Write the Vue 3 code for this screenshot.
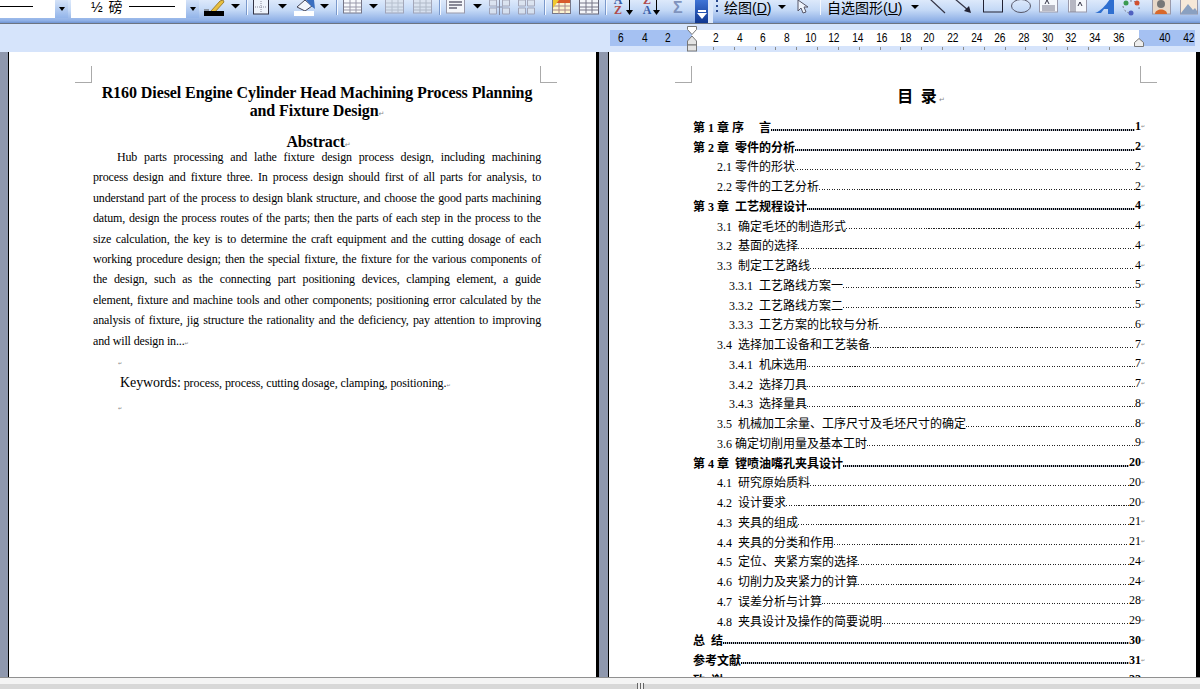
<template>
  <div class="app">
    <div class="toolbar">
      <div class="combo c1"><span class="sample s1"></span><span class="combo-btn"><i></i></span></div>
      <div class="combo c2"><span class="weight">½ 磅</span><span class="sample s2"></span><span class="combo-btn"><i></i></span></div>
      <!-- border colour pen -->
      <svg width="29" height="23"><path d="M12 11 L21 1 L24 0 L25 2 L15 13 Z" fill="#e8c040" stroke="#a08030"/><path d="M5 10h5" stroke="#555"/><rect x="5" y="11" width="20" height="5" fill="#000"/></svg>
      <svg width="15" height="23"><path d="M3 4h9l-4.500 4.500z"/></svg>
      <svg width="7" height="23"><path d="M4.500 0v15" stroke="#f4f8ff"/><path d="M3.500 0v15" stroke="#7a99cc"/></svg>
      <!-- outside border -->
      <svg width="25" height="23"><rect x="3.500" y="-3" width="15" height="17" fill="#eef3fb" stroke="#334"/><path d="M11 1v12M5 7h12" stroke="#889" stroke-dasharray="1 1"/></svg>
      <svg width="16" height="23"><path d="M3 4h9l-4.500 4.500z"/></svg>
      <!-- fill bucket -->
      <svg width="26" height="23"><path d="M6 7 L14 0 L21 6 L14 11 Z" fill="#f3f6fb" stroke="#445"/><path d="M15 0 L23 0 L24 9 L20 6 Z" fill="#3b6fc0"/><rect x="3" y="11" width="20" height="5" fill="#fff"/></svg>
      <svg width="16" height="23"><path d="M3 4h9l-4.500 4.500z"/></svg>
      <svg width="7" height="23"><path d="M4.500 0v15" stroke="#f4f8ff"/><path d="M3.500 0v15" stroke="#7a99cc"/></svg>
      <!-- insert table -->
      <svg width="25" height="23"><rect x="3.500" y="-2" width="18" height="15" fill="#f8fafd" stroke="#778"/><path d="M4 3h17M4 7h17M4 10h17M10 0v13M16 0v13" stroke="#99a"/></svg>
      <svg width="17" height="23"><path d="M4 4h9l-4.500 4.500z"/></svg>
      <svg width="28" height="23" class="off"><rect x="3.500" y="-2" width="18" height="15" fill="#dde4ee" stroke="#99a"/><path d="M4 3h17M4 7h17M4 10h17M10 0v13M16 0v13" stroke="#b0b8c4"/></svg>
      <svg width="26" height="23" class="off"><rect x="3.500" y="-2" width="18" height="15" fill="#dde4ee" stroke="#99a"/><path d="M4 3h17M4 7h17M4 10h17M10 0v13M16 0v13" stroke="#a8b0bc"/></svg>
      <svg width="7" height="23"><path d="M4.500 0v15" stroke="#f4f8ff"/><path d="M3.500 0v15" stroke="#7a99cc"/></svg>
      <!-- align -->
      <svg width="27" height="23"><rect x="3.500" y="-2" width="18" height="15" fill="#f4f6fa" stroke="#99a"/><path d="M6 2h13M6 5h13M6 8h8" stroke="#667" stroke-width="1.500"/></svg>
      <svg width="16" height="23"><path d="M3 4h9l-4.500 4.500z"/></svg>
      <svg width="30" height="23" class="off"><path d="M3.500 0h7v6h-7zM3.500 8h7v6h-7zM16.500 0h7v6h-7zM16.500 8h7v6h-7z" fill="#dde4ee" stroke="#99a"/><path d="M13.500 0v15M10 7h7" stroke="#778"/></svg>
      <svg width="25" height="23" class="off"><path d="M2.500 0h7v6h-7zM2.500 8h7v6h-7zM11.500 0h7v6h-7zM11.500 8h7v6h-7z" fill="#dde4ee" stroke="#99a"/></svg>
      <svg width="7" height="23"><path d="M4.500 0v15" stroke="#f4f8ff"/><path d="M3.500 0v15" stroke="#7a99cc"/></svg>
      <!-- table autoformat -->
      <svg width="27" height="23"><rect x="4.500" y="0.500" width="18" height="13" fill="#fbf3d0" stroke="#778"/><path d="M5 0h17v3H5z" fill="#d85a2a"/><path d="M5 6h17M5 10h17M11 3v11M17 3v11" stroke="#a88"/><path d="M5 0l6 0-6 8z" fill="#f0c830"/></svg>
      <svg width="27" height="23"><rect x="4.500" y="-1" width="19" height="15" fill="#f4f6fa" stroke="#667"/><path d="M5 3h18M5 7h18M5 10h18M11 0v13M17 0v13" stroke="#778"/></svg>
      <svg width="7" height="23"><path d="M4.500 0v15" stroke="#f4f8ff"/><path d="M3.500 0v15" stroke="#7a99cc"/></svg>
      <!-- sort and sum -->
      <div class="sort s-a"><span class="l-blue">A</span><span class="l-red">Z</span></div>
      <svg width="10" height="23"><path d="M4.500 0v12" stroke="#000"/><path d="M1 10h7l-3.500 5z"/></svg>
      <div class="sort s-z"><span class="l-red">Z</span><span class="l-blue">A</span></div>
      <svg width="10" height="23"><path d="M4.500 0v12" stroke="#000"/><path d="M1 10h7l-3.500 5z"/></svg>
      <span class="sigma">Σ</span>
      <div class="overflow"><i class="o-bar"></i><i class="o-tri"></i></div>
      <div class="gap-tab"></div>
      <div class="toolbar2">
        <span class="grip"></span>
        <span class="menu m1">绘图(<u>D</u>)</span>
        <svg width="22" height="23"><path d="M3 5h8l-4 4z"/></svg>
        <!-- cursor -->
        <svg width="23" height="23"><path d="M1 0 L1 11 L4 8 L6 13 L9 12 L7 7 L11 7 Z" fill="#eef3fb" stroke="#556"/></svg>
        <svg width="7" height="23"><path d="M0.500 0v15" stroke="#f4f8ff"/></svg>
        <span class="menu m2">自选图形(<u>U</u>)</span>
        <svg width="18" height="23"><path d="M0 5h8l-4 4z"/></svg>
        <svg width="26" height="23"><path d="M1 -1 L16 13" stroke="#334" stroke-width="1.200"/></svg>
        <svg width="28" height="23"><path d="M0 -1 L13 10" stroke="#334" stroke-width="1.200"/><path d="M9 11 L16 13 L14 6 Z" fill="#223"/></svg>
        <svg width="28" height="23"><rect x="0.500" y="-3" width="19" height="15" fill="none" stroke="#223"/></svg>
        <svg width="28" height="23"><ellipse cx="10" cy="6" rx="9.500" ry="6.500" fill="none" stroke="#556"/></svg>
        <svg width="28" height="23"><rect x="0.500" y="-2" width="18" height="14" fill="#f6f8fc" stroke="#99a"/><path d="M3 6h13M3 8h13M3 10h13" stroke="#778"/><path d="M6 4 l2-4 2 4" fill="none" stroke="#334"/></svg>
        <svg width="27" height="23"><rect x="1.500" y="-2" width="18" height="14" fill="#f6f8fc" stroke="#99a"/><path d="M4 0v12M6 0v12M8 0v12" stroke="#778"/><path d="M11 6 l2-4 2 4" fill="none" stroke="#334"/></svg>
        <svg width="28" height="23"><path d="M1 13 C7 11 12 5 16 -1 L20 -1 L20 14 L14 14 L14 9 L10 9 L7 13 Z" fill="#2f6fd0"/></svg>
        <svg width="30" height="23"><path d="M8 1 A8 7 0 0 1 17 9" fill="none" stroke="#778" stroke-dasharray="2 2"/><circle cx="15" cy="3" r="2.500" fill="#d05030"/><circle cx="4" cy="3" r="2.500" fill="#3a9a50"/><circle cx="9" cy="13" r="2.500" fill="#5060c0"/><path d="M1 6 A8 8 0 0 0 7 13" fill="none" stroke="#778" stroke-dasharray="2 2"/></svg>
        <svg width="28" height="23"><rect x="0.500" y="-2" width="18" height="16" fill="#e8d8c8" stroke="#99a"/><circle cx="9" cy="4" r="4" fill="#777"/><path d="M3 14 C3 8 15 8 15 14Z" fill="#d8682a"/></svg>
        <svg width="20" height="23"><rect x="0.500" y="-2" width="17" height="16" fill="#f6e8d8" stroke="#99a"/><path d="M1 13 L8 4 L13 10 L15 8 L17 11 V14 H1Z" fill="#8aa0c0"/></svg>
      </div>
    </div>

    <div class="ruler">
      <div class="scale">
        <div class="margin-l"><span v-for="n in leftNums" :key="n" class="num">{{ n }}</span></div>
        <div class="inner"><span v-for="n in innerNums" :key="n" class="num">{{ n }}</span></div>
        <div class="margin-r"><span class="num">40</span><span class="num">42</span></div>
      </div>
      <div class="ticks"></div>
      <svg class="hourglass" width="11" height="26" viewBox="0 0 11 26"><path d="M0.500 0.500h9v3l-4.500 5-4.500-5z" fill="#fff" stroke="#777"/><path d="M5 10l4.500 5v4h-9v-4z" fill="#e4e4e4" stroke="#777"/><rect x="0.500" y="19" width="9" height="6" fill="#e4e4e4" stroke="#777"/></svg>
      <svg class="indent-r" width="10" height="9" viewBox="0 0 10 9"><path d="M5 0.500l4.500 4v4h-9v-4z" fill="#eee" stroke="#777"/></svg>
    </div>

    <div class="work">
      <div class="gutter first"></div>
      <div class="page left">
        <div class="crops"><span class="crop tl"></span><span class="crop tr"></span></div>
        <h1 class="en-title">R160 Diesel Engine Cylinder Head Machining Process Planning and Fixture Design<span class="mark">↵</span></h1>
        <h2 class="abs-title">Abstract<span class="mark">↵</span></h2>
        <div class="abs-body">
          <div v-for="(line, i) in abstractLines" :key="i" class="abs-line" :class="{ first: i === 0 }">{{ line }}</div>
          <div class="abs-line last">and will design in...<span class="mark small">↵</span></div>
        </div>
        <div class="stub"><span class="mark small">↵</span></div>
        <div class="keywords"><span class="kw">Keywords:</span> process, process, cutting dosage, clamping, positioning.<span class="mark small">↵</span></div>
        <div class="stub s2"><span class="mark small">↵</span></div>
      </div>
      <div class="gutter mid"></div>
      <div class="page right">
        <div class="crops"><span class="crop tl"></span><span class="crop tr"></span></div>
        <div class="toc-title">目 录<span class="mark">↵</span></div>
        <div class="toc">
          <div v-for="(row, i) in toc" :key="i" class="row" :class="'lv' + row.lv">
            <span class="label">{{ row.t }}</span>
            <span class="leader"></span>
            <span class="pg">{{ row.p }}</span>
            <span class="mark tiny">↵</span>
          </div>
        </div>
      </div>
      <div class="gutter end"></div>
    </div>

    <div class="status">
      <span class="split"></span>
    </div>
  </div>
</template>

<script setup>
const leftNums = [6, 4, 2]
const innerNums = [2, 4, 6, 8, 10, 12, 14, 16, 18, 20, 22, 24, 26, 28, 30, 32, 34, 36]

const abstractLines = [
  'Hub parts processing and lathe fixture design process design, including machining',
  'process design and fixture three. In process design should first of all parts for analysis, to',
  'understand part of the process to design blank structure, and choose the good parts machining',
  'datum, design the process routes of the parts; then the parts of each step in the process to the',
  'size calculation, the key is to determine the craft equipment and the cutting dosage of each',
  'working procedure design; then the special fixture, the fixture for the various components of',
  'the design, such as the connecting part positioning devices, clamping element, a guide',
  'element, fixture and machine tools and other components; positioning error calculated by the',
  'analysis of fixture, jig structure the rationality and the deficiency, pay attention to improving'
]

const toc = [
  { lv: 1, t: '第 1 章 序\u00a0\u00a0\u00a0\u00a0 言', p: 1 },
  { lv: 1, t: '第 2 章  零件的分析', p: 2 },
  { lv: 2, t: '2.1 零件的形状', p: 2 },
  { lv: 2, t: '2.2 零件的工艺分析', p: 2 },
  { lv: 1, t: '第 3 章  工艺规程设计', p: 4 },
  { lv: 2, t: '3.1  确定毛坯的制造形式', p: 4 },
  { lv: 2, t: '3.2  基面的选择', p: 4 },
  { lv: 2, t: '3.3  制定工艺路线', p: 4 },
  { lv: 3, t: '3.3.1  工艺路线方案一', p: 5 },
  { lv: 3, t: '3.3.2  工艺路线方案二', p: 5 },
  { lv: 3, t: '3.3.3  工艺方案的比较与分析', p: 6 },
  { lv: 2, t: '3.4  选择加工设备和工艺装备', p: 7 },
  { lv: 3, t: '3.4.1  机床选用', p: 7 },
  { lv: 3, t: '3.4.2  选择刀具', p: 7 },
  { lv: 3, t: '3.4.3  选择量具', p: 8 },
  { lv: 2, t: '3.5  机械加工余量、工序尺寸及毛坯尺寸的确定', p: 8 },
  { lv: 2, t: '3.6 确定切削用量及基本工时', p: 9 },
  { lv: 1, t: '第 4 章  镗喷油嘴孔夹具设计', p: 20 },
  { lv: 2, t: '4.1  研究原始质料', p: 20 },
  { lv: 2, t: '4.2  设计要求', p: 20 },
  { lv: 2, t: '4.3  夹具的组成', p: 21 },
  { lv: 2, t: '4.4  夹具的分类和作用', p: 21 },
  { lv: 2, t: '4.5  定位、夹紧方案的选择', p: 24 },
  { lv: 2, t: '4.6  切削力及夹紧力的计算', p: 24 },
  { lv: 2, t: '4.7  误差分析与计算', p: 28 },
  { lv: 2, t: '4.8  夹具设计及操作的简要说明', p: 29 },
  { lv: 1, t: '总  结', p: 30 },
  { lv: 1, t: '参考文献', p: 31 },
  { lv: 1, t: '致  谢', p: 32 }
]
</script>

<style>
html, body {
  margin: 0;
  background: #fff;
}
</style>

<style scoped>
.app {
  width: 1200px;
  height: 689px;
  display: flex;
  flex-direction: column;
  overflow: hidden;
  font-family: "Liberation Serif", "Noto Sans CJK SC", serif;
  color: #000;
}

/* toolbar */
.toolbar {
  height: 23px;
  flex: none;
  display: flex;
  background: linear-gradient(#dde9fb, #c3d8f6 45%, #8fb0e6 90%, #6f93d2);
  border-bottom: 1px solid #6d7480;
  box-sizing: content-box;
  overflow: hidden;
}
.toolbar svg {
  flex: none;
  display: block;
}
.off {
  opacity: 0.8;
}
.combo {
  height: 18px;
  background: #fff;
  display: flex;
  align-items: flex-start;
  flex: none;
  box-sizing: border-box;
}
.c1 {
  width: 68px;
}
.c2 {
  width: 128px;
  margin-left: 3px;
  padding-left: 20px;
}
.combo-btn {
  width: 13px;
  height: 18px;
  margin-left: auto;
  background: linear-gradient(#d5e3f8, #93b5ea);
  display: flex;
  align-items: center;
  justify-content: center;
}
.combo-btn i {
  border-left: 3.500px solid transparent;
  border-right: 3.500px solid transparent;
  border-top: 4px solid #000;
}
.sample {
  display: block;
  height: 1px;
  background: #000;
  margin-top: 6px;
}
.s1 {
  width: 33px;
}
.s2 {
  width: 46px;
  margin-left: 6px;
}
.weight {
  font-family: "Liberation Sans", "Noto Sans CJK SC", sans-serif;
  font-size: 14px;
  line-height: 15px;
  white-space: nowrap;
  word-spacing: 2px;
}
.sort {
  width: 10px;
  flex: none;
  display: flex;
  flex-direction: column;
  font-weight: bold;
  font-size: 12px;
  line-height: 10px;
  align-items: center;
  margin-top: -5px;
}
.s-a {
  margin-left: 4px;
  margin-right: 2px;
}
.s-z {
  margin-left: 7px;
  margin-right: 0;
}
.l-blue {
  color: #3a5ea8;
}
.l-red {
  color: #b04a4a;
}
.sigma {
  flex: none;
  width: 22px;
  padding-left: 11px;
  color: #7f93bd;
  font: bold 16px/15px "Liberation Sans", sans-serif;
}
.overflow {
  width: 13px;
  height: 23px;
  flex: none;
  background: linear-gradient(#3f74d6, #0f3690);
  position: relative;
}
.o-bar {
  position: absolute;
  left: 3px;
  top: 10px;
  width: 8px;
  height: 2px;
  background: #fff;
}
.o-tri {
  position: absolute;
  left: 2px;
  top: 13px;
  width: 0;
  height: 0;
  border-left: 5px solid transparent;
  border-right: 5px solid transparent;
  border-top: 6px solid #fff;
}
.gap-tab {
  width: 5px;
  flex: none;
  background: #dce8fa;
}
.toolbar2 {
  flex: none;
  display: flex;
  width: 487px;
  padding-left: 3px;
  box-sizing: border-box;
}
.grip {
  width: 2px;
  height: 15px;
  margin-right: 6px;
  flex: none;
  background: repeating-linear-gradient(#2a4a90 0 2px, transparent 2px 5px);
}
.menu {
  flex: none;
  font: 14px/17px "Liberation Sans", "Noto Sans CJK SC", sans-serif;
  white-space: nowrap;
}
.m1 {
  width: 51px;
}
.m2 {
  width: 84px;
}

/* ruler */
.ruler {
  height: 28px;
  flex: none;
  background: #d6e4fb;
  padding: 6px 0 0 610px;
  box-sizing: border-box;
  position: relative;
}
.scale {
  display: flex;
  height: 16px;
  font: 12px/16px "Liberation Sans", sans-serif;
}
.num {
  width: 23.700px;
  text-align: center;
  flex: none;
  transform: scaleX(0.85);
}
.margin-l {
  width: 82px;
  background: #a5c1f2;
  display: flex;
  justify-content: flex-end;
  padding-right: 12px;
  box-sizing: border-box;
}
.inner {
  width: 447px;
  background: #fff;
  display: flex;
  padding-left: 12px;
  box-sizing: border-box;
}
.margin-r {
  width: 56px;
  background: #a5c1f2;
  display: flex;
  padding-left: 14px;
  box-sizing: border-box;
}
.ticks {
  height: 3px;
  margin: 1px 0 0 103px;
  width: 415px;
  background: repeating-linear-gradient(90deg, #8a8a8a 0 1px, transparent 1px 20.830px);
}
.hourglass {
  position: absolute;
  left: 687px;
  top: 2px;
}
.indent-r {
  position: absolute;
  left: 1134px;
  top: 14px;
}

/* document area */
.work {
  flex: 1;
  min-height: 0;
  display: flex;
  overflow: hidden;
  background: #fff;
}
.gutter {
  flex: none;
  background: #8f98ae;
  box-sizing: border-box;
}
.gutter.first {
  width: 9px;
  border-right: 1px solid #000;
}
.gutter.mid {
  width: 13px;
  border-left: 3px solid #000;
  border-right: 1px solid #000;
}
.gutter.end {
  width: 4px;
  background: #000;
}
.page {
  background: #fff;
  padding-top: 14px;
  box-sizing: border-box;
}
.page.left {
  width: 587px;
  padding-left: 84px;
}
.page.right {
  width: 587px;
  padding-left: 84px;
}
.crops {
  display: flex;
  justify-content: space-between;
  height: 17px;
  width: 482px;
  margin-left: -18px;
}
.crop {
  display: block;
  width: 17px;
  height: 17px;
  box-sizing: border-box;
  border-bottom: 1px solid #aaa;
}
.tl {
  border-right: 1px solid #aaa;
}
.tr {
  border-left: 1px solid #aaa;
}
.mark {
  color: #888;
  font: 7px/1 "DejaVu Sans", sans-serif;
  font-weight: normal;
}
.mark.small {
  font-size: 5px;
}
.mark.tiny {
  font-size: 5px;
  width: 4px;
  flex: none;
  overflow: hidden;
  align-self: center;
}
.en-title {
  width: 448px;
  margin: 0;
  padding-top: 1px;
  text-align: center;
  font-size: 16px;
  line-height: 18px;
  font-weight: bold;
  letter-spacing: -0.080px;
}
.abs-title {
  width: 448px;
  margin: 13px 0 0;
  padding-left: 3px;
  box-sizing: border-box;
  text-align: center;
  font-size: 16px;
  line-height: 18px;
  font-weight: bold;
  letter-spacing: -0.150px;
}
.abs-body {
  width: 448px;
  margin-top: -4px;
  font-size: 12px;
  line-height: 20.400px;
}
.abs-line {
  text-align: justify;
  text-align-last: justify;
  letter-spacing: -0.150px;
}
.abs-line.first {
  text-indent: 24px;
}
.abs-line.last {
  text-align-last: left;
}
.stub {
  height: 18px;
  line-height: 18px;
  padding-left: 25px;
  margin-bottom: 4px;
}
.stub.s2 {
  margin: 3px 0 0;
  height: 16px;
}
.keywords {
  font-size: 12px;
  line-height: 20px;
  padding-left: 27px;
  white-space: nowrap;
  letter-spacing: -0.080px;
}
.kw {
  font-size: 14px;
}
.toc-title {
  width: 448px;
  padding: 2px 0 0 10px;
  box-sizing: border-box;
  text-align: center;
  font: bold 16px/20px "Noto Sans CJK SC", sans-serif;
  letter-spacing: 2px;
}
.toc {
  width: 452px;
  margin-top: 12px;
}
.row {
  height: 19.750px;
  display: flex;
  align-items: center;
  font-size: 12px;
  white-space: pre;
}
.lv1 {
  font-weight: bold;
}
.lv2 {
  padding-left: 24px;
}
.lv3 {
  padding-left: 36px;
}
.leader {
  flex: 1;
  height: 1px;
  margin-top: 6px;
  background: repeating-linear-gradient(90deg, #222 0 1px, transparent 1px 2.500px);
}
.lv1 .leader {
  height: 2px;
  background: repeating-linear-gradient(90deg, #000 0 1px, #b0b8c8 1px 2px);
}

/* bottom bar */
.status {
  height: 12px;
  flex: none;
  border-top: 1px solid #909090;
  background: linear-gradient(#f4f4f4 0 50%, #d8d8d8 50%);
  display: flex;
  justify-content: center;
  box-sizing: border-box;
  padding-left: 80px;
  align-items: flex-end;
}
.split {
  width: 7px;
  height: 6px;
  background: repeating-linear-gradient(90deg, #666 0 1px, #eee 1px 3px);
}
</style>
